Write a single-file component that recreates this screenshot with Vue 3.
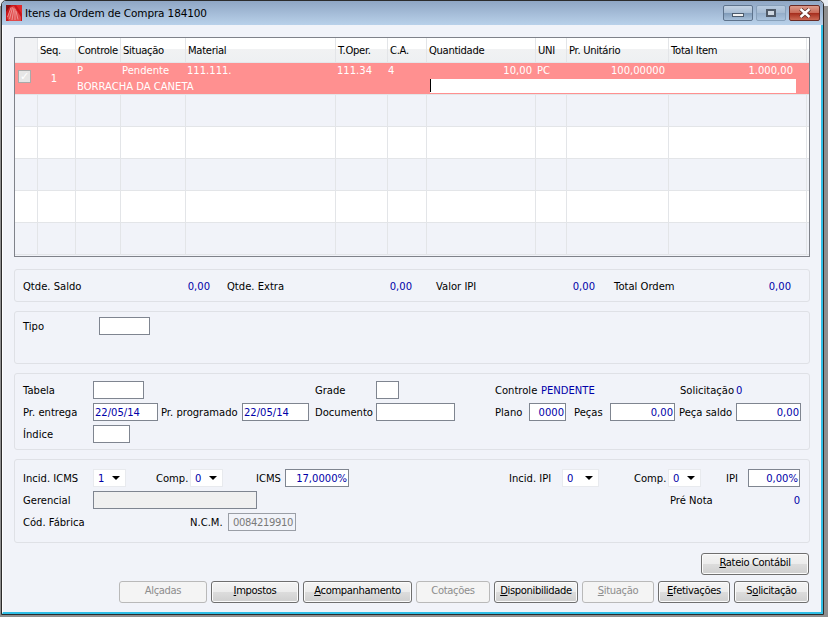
<script setup>
const columns = [
  { w: 23, t: '' }, { w: 38, t: 'Seq.' }, { w: 45, t: 'Controle' }, { w: 65, t: 'Situação' },
  { w: 150, t: 'Material' }, { w: 52, t: 'T.Oper.' }, { w: 39, t: 'C.A.' }, { w: 109, t: 'Quantidade' },
  { w: 31, t: 'UNI' }, { w: 102, t: 'Pr. Unitário' }, { w: 138, t: 'Total Item' }
]
const emptyRows = [0, 1, 2, 3, 4]
const bottomButtons = [
  { k: 'al', pre: 'Alçadas', key: '', post: '', off: true },
  { k: 'im', pre: '', key: 'I', post: 'mpostos' },
  { k: 'ac', pre: '', key: 'A', post: 'companhamento' },
  { k: 'co', pre: 'Cotações', key: '', post: '', off: true },
  { k: 'di', pre: '', key: 'D', post: 'isponibilidade' },
  { k: 'si', pre: '', key: 'S', post: 'ituação', off: true },
  { k: 'ef', pre: '', key: 'E', post: 'fetivações' },
  { k: 'so', pre: 'S', key: 'o', post: 'licitação' }
]
</script>

<template>
  <div class="window">
    <div class="frame">
      <header class="titlebar">
        <svg class="appicon" width="16" height="16" viewBox="0 0 16 16">
          <rect width="16" height="16" fill="#c9161b" />
          <path d="M0 0 H5 L0 7 Z" fill="#8a0c10" />
          <path d="M16 0 V9 L10 0 Z" fill="#e3282a" />
          <path d="M1 13 L5 2 L8 1 L15 12 L15 16 L3 16 Z" fill="#e04a4a" />
          <path d="M1.5 12 L5 2.5 M3.5 14 L6.5 2.5 M6 15 L8 3 M9 15 L9 4 M12 14.5 L10 6" stroke="#f6c0c0" stroke-width="0.8" stroke-opacity="0.8" fill="none" />
        </svg>
        <span class="title">Itens da Ordem de Compra 184100</span>
        <div class="winbtns">
          <span class="wb wb-min"><i></i></span>
          <span class="wb wb-max"><i></i></span>
          <span class="wb wb-close">
            <svg width="14" height="10" viewBox="0 0 14 10">
              <path d="M2.5 1 L11.5 9 M11.5 1 L2.5 9" stroke="#5a2a20" stroke-width="4" fill="none" />
              <path d="M2.5 1 L11.5 9 M11.5 1 L2.5 9" stroke="#fff" stroke-width="2.4" fill="none" />
            </svg>
          </span>
        </div>
      </header>

      <main class="content">
        <section class="grid">
          <div class="ghead">
            <div v-for="c in columns" :key="c.t" class="gh" :style="{ width: c.w + 'px' }">{{ c.t }}</div>
          </div>
          <div class="selected">
            <div class="sel-check"><span class="check">✓</span></div>
            <div class="sel-seq">1</div>
            <div class="sel-main">
              <div class="sel-top">
                <span class="s-ctrl">P</span>
                <span class="s-sit">Pendente</span>
                <span class="s-mat">111.111.</span>
                <span class="s-op">111.34</span>
                <span class="s-ca">4</span>
                <span class="s-qt">10,00</span>
                <span class="s-un">PC</span>
                <span class="s-pr">100,00000</span>
                <span class="s-tot">1.000,00</span>
              </div>
              <div class="sel-bottom">
                <span class="s-desc">BORRACHA DA CANETA</span>
                <span class="s-edit"><i class="caret"></i></span>
              </div>
            </div>
          </div>
          <div v-for="r in emptyRows" :key="r" class="grow" :class="{ white: r % 2 === 1 }">
            <div v-for="c in columns" :key="c.t" class="gc" :style="{ width: c.w + 'px' }"></div>
          </div>
        </section>

        <section class="panel p-totals">
          <div class="pair w1"><span>Qtde. Saldo</span><b>0,00</b></div>
          <div class="pair w2"><span>Qtde. Extra</span><b>0,00</b></div>
          <div class="pair w3"><span>Valor IPI</span><b>0,00</b></div>
          <div class="pair w4"><span>Total Ordem</span><b>0,00</b></div>
        </section>

        <section class="panel p-tipo">
          <div class="row r-tipo"><span>Tipo</span><span class="inp"></span></div>
        </section>

        <section class="panel p-form">
          <div class="row r-a">
            <span>Tabela</span><span class="inp"></span><i></i>
            <span>Grade</span><span class="inp"></span><i></i>
            <span>Controle</span><b>PENDENTE</b>
            <span>Solicitação</span><b>0</b>
          </div>
          <div class="row r-b">
            <span>Pr. entrega</span><span class="inp val">22/05/14</span>
            <span class="lead3">Pr. programado</span><span class="inp val">22/05/14</span>
            <span class="lead6">Documento</span><span class="inp"></span>
            <span class="lead40">Plano</span><span class="inp val end">0000</span>
            <span class="lead8">Peças</span><span class="inp val end">0,00</span>
            <span class="lead4">Peça saldo</span><span class="inp val end">0,00</span>
          </div>
          <div class="row r-c"><span>Índice</span><span class="inp"></span></div>
        </section>

        <section class="panel p-tax">
          <div class="row r-d">
            <span>Incid. ICMS</span><span class="sel"><b>1</b><em></em></span><i></i>
            <span>Comp.</span><span class="sel"><b>0</b><em></em></span><i></i>
            <span>ICMS</span><span class="inp val end">17,0000%</span><i></i>
            <span>Incid. IPI</span><span class="sel"><b>0</b><em></em></span><i></i>
            <span>Comp.</span><span class="sel"><b>0</b><em></em></span><i></i>
            <span>IPI</span><span class="inp val end">0,00%</span>
          </div>
          <div class="row r-e">
            <span>Gerencial</span><span class="inp readonly"></span><i></i>
            <span>Pré Nota</span><b class="end">0</b>
          </div>
          <div class="row r-f">
            <span>Cód. Fábrica</span><span class="ncm-l">N.C.M.</span><span class="inp disabled">0084219910</span>
          </div>
        </section>

        <div class="actions top">
          <button class="btn b-ra"><u>R</u>ateio Contábil</button>
        </div>
        <div class="actions">
          <button v-for="b in bottomButtons" :key="b.k" class="btn" :class="['b-' + b.k, { off: b.off }]">{{ b.pre }}<u v-if="b.key">{{ b.key }}</u>{{ b.post }}</button>
        </div>
      </main>
    </div>
  </div>
</template>

<style>
html, body { margin: 0; background: #9a9a9a; }
</style>

<style scoped>
.window {
  width: 828px; height: 617px; box-sizing: border-box; overflow: hidden;
  font: 10px/12px "DejaVu Sans", sans-serif; color: #000;
  background: linear-gradient(#e8ecf2 0, #e8ecf2 6px, #8f8f8f 6px);
  padding: 0 4px 2px 1px;
}
.frame {
  height: 100%; box-sizing: border-box; border: 1px solid #2b2b2b;
  border-radius: 5px 5px 0 0; overflow: hidden;
  display: flex; flex-direction: column; background: #f1f3f9;
}
.titlebar {
  height: 24px; flex: none; display: flex; align-items: center;
  padding: 0 3px 0 4px;
  background: linear-gradient(#8fa6c4, #b9d1ea);
}
.appicon { flex: none; margin: 0 3px 0 0; }
.title { font-size: 10.5px; letter-spacing: -0.13px; }
.winbtns { margin-left: auto; align-self: flex-start; display: flex; gap: 3px; padding-top: 4px; }
.wb { width: 30px; height: 16px; box-sizing: border-box; border: 1px solid #5e738c; border-radius: 2px; display: flex; align-items: center; justify-content: center; background: linear-gradient(#c4d3e4 0, #a8bdd4 50%, #7f9ab8 51%, #a6bfd9 100%); }
.wb-max { background: linear-gradient(#b8cbe0 0, #a5bad2 50%, #94adc9 51%, #aac3de 100%); border-color: #88a0ba; }
.wb-min i { display: block; width: 12px; height: 4px; margin-top: 4px; background: #f2f2f2; border: 1px solid #4b5a6c; box-sizing: border-box; }
.wb-max i { display: block; width: 10px; height: 8px; border: 2px solid #4f5a68; background: #cfd8e2; box-sizing: border-box; }
.wb-close { width: 31px; background: linear-gradient(#dc9a8a 0, #c96a58 50%, #a52c1c 51%, #cc6a55 100%); border-color: #6a2a24; }

.content { flex: 1; padding: 12px 0 0 11px; display: flex; flex-direction: column; border-right: 2px solid #2fbfe6; border-bottom: 2px solid #2fbfe6; border-left: 1px solid #fff; }

.grid { width: 796px; height: 220px; box-sizing: border-box; border: 1px solid #7f828a; flex: none; overflow: hidden; }
.ghead { display: flex; height: 24px; letter-spacing: -0.3px; background: linear-gradient(#fff 0, #fff 45%, #f1f2f3 46%, #eef0f2 100%); border-bottom: 1px solid #e4e6ea; }
.gh { box-sizing: border-box; flex: none; padding: 7px 0 0 2px; border-right: 1px solid #e3e5e8; white-space: nowrap; }
.gh:first-child { background: #f1f2f4; }
.selected { height: 31px; background: #ff9090; color: #fff; display: flex; border-bottom: 1px solid #e3e5e8; }
.sel-check { width: 23px; flex: none; padding: 7px 0 0 3px; box-sizing: border-box; }
.check { display: block; width: 13px; height: 13px; box-sizing: border-box; border: 1px solid #a9a9a9; background: #e6e6e6; color: #fff; font-size: 11px; line-height: 11px; text-align: center; overflow: hidden; }
.sel-seq { width: 38px; flex: none; text-align: center; line-height: 31px; padding-right: 6px; box-sizing: border-box; }
.sel-main { flex: 1; display: flex; flex-direction: column; }
.sel-top { display: flex; height: 16px; line-height: 15px; }
.sel-top span { flex: none; white-space: nowrap; }
.s-ctrl { width: 46px; padding-left: 1px; box-sizing: border-box; }
.s-sit { width: 65px; }
.s-mat { width: 150px; }
.s-op { width: 51px; }
.s-ca { width: 39px; }
.s-qt { width: 105px; text-align: right; }
.s-un { width: 33px; padding-left: 5px; box-sizing: border-box; }
.s-pr { width: 100px; text-align: right; }
.s-tot { width: 128px; text-align: right; }
.sel-bottom { display: flex; height: 15px; }
.s-desc { width: 354px; flex: none; padding-left: 1px; box-sizing: border-box; white-space: nowrap; line-height: 16px; }
.s-edit { width: 366px; flex: none; height: 14px; background: #fff; }
.caret { display: block; width: 1px; height: 13px; background: #000; }
.grow { display: flex; height: 32px; box-sizing: border-box; border-bottom: 1px solid #e3e5e8; }
.grow.white { background: #fff; }
.gc { box-sizing: border-box; flex: none; border-right: 1px solid #e3e5e8; }

.panel { width: 796px; box-sizing: border-box; border: 1px solid #dfe1e6; border-radius: 3px; padding: 7px 8px 0; flex: none; }
.panel b { font-weight: normal; color: #0000a8; }
.panel span, .panel b { white-space: nowrap; }
.row { display: flex; height: 18px; align-items: center; }
.row > i { display: block; flex: none; }
.row > * { flex: none; }
.row > span:not(.inp):not(.sel), .row > b { padding-top: 2px; box-sizing: border-box; }
.inp { height: 18px; box-sizing: border-box; border: 1px solid #7f8590; background: #fff; display: block; line-height: 18px; padding: 0 1px; }
.panel .val { color: #0000a8; }
.end { text-align: right; }

.p-totals { margin-top: 12px; height: 33px; display: flex; padding: 11px 8px 0; }
.pair { display: flex; justify-content: space-between; height: 12px; flex: none; }
.w1 { width: 187px; margin-right: 17px; }
.w2 { width: 185px; margin-right: 24px; }
.w3 { width: 159px; margin-right: 19px; }
.w4 { width: 177px; }

.p-tipo { margin-top: 9px; height: 53px; padding-top: 5px; }
.r-tipo > span:first-child { width: 76px; }
.r-tipo .inp { width: 51px; }

.p-form { margin-top: 9px; height: 77px; display: flex; flex-direction: column; gap: 4px; }
.r-a > :nth-child(1), .r-b > :nth-child(1), .r-c > :nth-child(1),
.r-d > :nth-child(1), .r-e > :nth-child(1) { width: 70px; }
.r-a > :nth-child(2) { width: 51px; }
.r-a > :nth-child(3) { width: 171px; }
.r-a > :nth-child(4) { width: 61px; }
.r-a > :nth-child(5) { width: 23px; }
.r-a > :nth-child(6) { width: 96px; }
.r-a > :nth-child(7) { width: 46px; }
.r-a > :nth-child(8) { width: 139px; }
.r-a > :nth-child(9) { width: 56px; }
.r-b > :nth-child(2) { width: 65px; }
.r-b > :nth-child(3) { width: 81px; }
.r-b > :nth-child(4) { width: 67px; }
.r-b > :nth-child(5) { width: 61px; }
.r-b > :nth-child(6) { width: 79px; }
.r-b > :nth-child(7) { width: 34px; }
.r-b > :nth-child(8) { width: 37px; }
.r-b > :nth-child(9) { width: 36px; }
.r-b > :nth-child(10) { width: 65px; }
.r-b > :nth-child(11) { width: 57px; }
.r-b > :nth-child(12) { width: 65px; }
.lead3 { margin-left: 3px; }
.lead6 { margin-left: 6px; }
.lead40 { margin-left: 40px; }
.lead8 { margin-left: 8px; }
.lead4 { margin-left: 4px; }
.r-c .inp { width: 37px; }

.p-tax { margin-top: 9px; height: 84px; padding-top: 9px; display: flex; flex-direction: column; gap: 4px; }
.sel { height: 18px; box-sizing: border-box; border: 1px solid #e8eaee; background: #fff; display: flex; align-items: center; justify-content: space-between; padding: 0 4px; }
.sel b { margin-top: 2px; }
.sel em { display: block; width: 0; height: 0; border: 4px solid transparent; border-top: 4px solid #000; border-bottom: 0; margin-right: 1px; }
.r-d > :nth-child(2) { width: 33px; }
.r-d > :nth-child(3) { width: 30px; }
.r-d > :nth-child(4) { width: 34px; }
.r-d > :nth-child(5) { width: 33px; }
.r-d > :nth-child(6) { width: 33px; }
.r-d > :nth-child(7) { width: 29px; }
.r-d > :nth-child(8) { width: 64px; }
.r-d > :nth-child(9) { width: 160px; }
.r-d > :nth-child(10) { width: 53px; }
.r-d > :nth-child(11) { width: 37px; }
.r-d > :nth-child(12) { width: 35px; }
.r-d > :nth-child(13) { width: 34px; }
.r-d > :nth-child(14) { width: 33px; }
.r-d > :nth-child(15) { width: 25px; }
.r-d > :nth-child(16) { width: 22px; }
.r-d > :nth-child(17) { width: 52px; }
.r-e > :nth-child(2) { width: 164px; }
.readonly { background: #f0f0f0; }
.r-e > :nth-child(3) { width: 413px; }
.r-e > :nth-child(4) { width: 120px; }
.r-e > :nth-child(5) { width: 10px; }
.ncm-l { width: 38px; }
.r-f > :nth-child(1) { width: 167px; }
.disabled { width: 68px; color: #7a7a7a; background: #f1f3f9; border-color: #9a9ea6; letter-spacing: -0.35px; text-align: right; padding-right: 2px; }

.actions { display: flex; justify-content: flex-end; gap: 4px; margin-top: 6px; width: 795px; }
.actions.top { margin-top: 10px; }
.btn {
  height: 22px; box-sizing: border-box; padding: 0 0 2px; margin: 0; flex: none;
  font: inherit; letter-spacing: -0.35px; color: #000; border: 1px solid #6f6f6f; border-radius: 3px;
  background: linear-gradient(#f4f4f4 0, #ececec 48%, #dcdcdc 52%, #cfcfcf 100%);
  box-shadow: inset 0 0 0 1px #fbfbfb;
}
.btn.off { color: #8d8d8d; border-color: #b9b9b9; background: #f4f4f4; box-shadow: none; }
.b-ra { width: 108px; }
.b-al { width: 88px; }
.b-im { width: 88px; }
.b-ac { width: 109px; }
.b-co { width: 74px; }
.b-di { width: 84px; }
.b-si { width: 72px; }
.b-ef { width: 72px; }
.b-so { width: 75px; }
</style>
